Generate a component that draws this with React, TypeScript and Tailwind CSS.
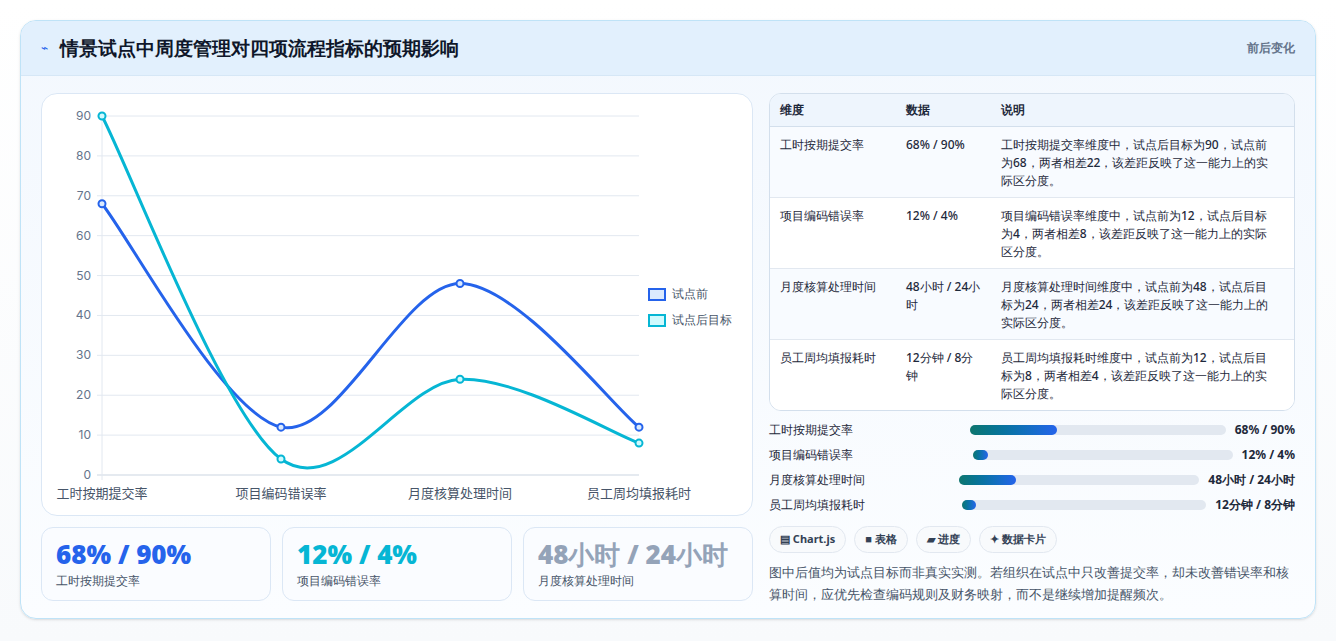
const cats = ["工时按期提交率", "项目编码错误率", "月度核算处理时间", "员工周均填报耗时"];
const before = [68, 12, 48, 12];
const after = [90, 4, 24, 8];
const xs = [60, 239, 418, 597];
const yOf = (v: number) => 381 - (v * 359) / 90;

function curve(vals: number[]): string {
  const p = vals.map((v, i) => [xs[i], yOf(v)]);
  let d = `M${p[0][0]},${p[0][1]}`;
  for (let i = 0; i < p.length - 1; i++) {
    const p0 = p[Math.max(0, i - 1)];
    const p1 = p[i];
    const p2 = p[i + 1];
    const p3 = p[Math.min(p.length - 1, i + 2)];
    const t = 0.32;
    const c1x = p1[0] + ((p2[0] - p0[0]) * t) / 2;
    const c1y = p1[1] + ((p2[1] - p0[1]) * t) / 2;
    const c2x = p2[0] - ((p3[0] - p1[0]) * t) / 2;
    const c2y = p2[1] - ((p3[1] - p1[1]) * t) / 2;
    d += ` C${c1x},${c1y} ${c2x},${c2y} ${p2[0]},${p2[1]}`;
  }
  return d;
}

const rows = [
  { dim: "工时按期提交率", data: "68% / 90%", note: "工时按期提交率维度中，试点后目标为90，试点前为68，两者相差22，该差距反映了这一能力上的实际区分度。" },
  { dim: "项目编码错误率", data: "12% / 4%", note: "项目编码错误率维度中，试点前为12，试点后目标为4，两者相差8，该差距反映了这一能力上的实际区分度。" },
  { dim: "月度核算处理时间", data: "48小时 / 24小时", note: "月度核算处理时间维度中，试点前为48，试点后目标为24，两者相差24，该差距反映了这一能力上的实际区分度。" },
  { dim: "员工周均填报耗时", data: "12分钟 / 8分钟", note: "员工周均填报耗时维度中，试点前为12，试点后目标为8，两者相差4，该差距反映了这一能力上的实际区分度。" },
];

const bars = [
  { label: "工时按期提交率", value: "68% / 90%", fill: "w-[34%]" },
  { label: "项目编码错误率", value: "12% / 4%", fill: "w-[6%]" },
  { label: "月度核算处理时间", value: "48小时 / 24小时", fill: "w-[24%]" },
  { label: "员工周均填报耗时", value: "12分钟 / 8分钟", fill: "w-[6%]" },
];

function Chart() {
  return (
    <div className="h-[423px] rounded-2xl border border-[#dbe7f5] bg-white relative">
      <svg width="712" height="423" className="absolute inset-0">
        {[0, 10, 20, 30, 40, 50, 60, 70, 80, 90].map((v) => (
          <g key={v}>
            <line x1="55" x2="597" y1={yOf(v)} y2={yOf(v)} stroke={v === 0 ? "#cbd5e1" : "#e2e8f0"} />
            <text x="49" y={yOf(v) + 4} textAnchor="end" fontSize="12" fill="#64748b" fontFamily="Inter, sans-serif">{v}</text>
          </g>
        ))}
        <line x1="60" x2="60" y1="22" y2="386" stroke="#e2e8f0" />
        {cats.map((c, i) => (
          <text key={c} x={xs[i]} y="404" textAnchor="middle" fontSize="13" fill="#475569" fontFamily="'Noto Sans CJK SC', sans-serif">{c}</text>
        ))}
        <path d={curve(before)} fill="none" stroke="#2563eb" strokeWidth="3" />
        <path d={curve(after)} fill="none" stroke="#06b6d4" strokeWidth="3" />
        {before.map((v, i) => (
          <circle key={"b" + i} cx={xs[i]} cy={yOf(v)} r="3.5" fill="#dbeafe" stroke="#2563eb" strokeWidth="2" />
        ))}
        {after.map((v, i) => (
          <circle key={"a" + i} cx={xs[i]} cy={yOf(v)} r="3.5" fill="#cffafe" stroke="#06b6d4" strokeWidth="2" />
        ))}
      </svg>
      <div className="absolute left-[606px] top-[191px] flex flex-col gap-[8px] text-[12px] font-medium text-[#475569]">
        <div className="flex items-center gap-1.5"><span className="w-[18px] h-[13px] border-2 border-[#2563eb] bg-[#dbeafe]" />试点前</div>
        <div className="flex items-center gap-1.5"><span className="w-[18px] h-[13px] border-2 border-[#06b6d4] bg-[#cffafe]" />试点后目标</div>
      </div>
    </div>
  );
}

export default function App() {
  return (
    <div className="w-[1336px] h-[641px] p-5 pb-[22px] font-['Noto_Sans_CJK_SC',sans-serif]" style={{ background: "linear-gradient(#ffffff, #f8fafc)" }}>
      <div className="h-full rounded-2xl border border-[#bfe3f7] bg-gradient-to-b from-[#f3f8fe] to-[#fbfdff] overflow-hidden shadow-sm">
        <div className="h-[55px] flex items-center justify-between px-5 bg-[#e2f0fd] border-b border-[#d6e7f6]">
          <div className="flex items-center gap-3">
            <span className="text-[#2563eb] text-[12px]">⌁</span>
            <h1 className="text-[19px] font-bold text-[#0f172a]">情景试点中周度管理对四项流程指标的预期影响</h1>
          </div>
          <span className="text-[12px] font-bold text-[#64748b]">前后变化</span>
        </div>
        <div className="flex gap-4 px-5 pt-[17px]">
          <div className="w-[712px] flex flex-col gap-[11px]">
            <Chart />
            <div className="flex gap-[11px]">
              {[
                { v: "68% / 90%", l: "工时按期提交率", c: "text-[#2563eb]" },
                { v: "12% / 4%", l: "项目编码错误率", c: "text-[#06b6d4]" },
                { v: "48小时 / 24小时", l: "月度核算处理时间", c: "text-[#94a3b8]" },
              ].map((k) => (
                <div key={k.l} className="flex-1 h-[74px] rounded-xl border border-[#dbe7f5] bg-[#fafcff] px-[14px] pt-[10px]">
                  <div className={"text-[26px] font-black leading-[32px] whitespace-nowrap " + k.c}>{k.v}</div>
                  <div className="text-[12px] text-[#475569] mt-0.5">{k.l}</div>
                </div>
              ))}
            </div>
          </div>
          <div className="flex-1 flex flex-col">
            <div className="rounded-xl border border-[#d3dfec] overflow-hidden bg-white text-[12px] text-[#1e293b]">
              <div className="flex h-[33px] items-center bg-[#eef5fd] font-bold border-b border-[#d3dfec]">
                <div className="w-[136px] pl-[10px]">维度</div>
                <div className="w-[95px]">数据</div>
                <div className="flex-1">说明</div>
              </div>
              {rows.map((r, i) => (
                <div key={r.dim} className={"flex py-[9px] font-medium leading-[18px] " + (i % 2 === 0 ? "bg-[#f8fbff] " : "bg-white ") + (i < 3 ? "border-b border-[#e2e8f0]" : "")}>
                  <div className="w-[136px] pl-[10px] pr-2">{r.dim}</div>
                  <div className="w-[95px] pr-4">{r.data}</div>
                  <div className="flex-1 pr-4 h-[52px]">{r.note}</div>
                </div>
              ))}
            </div>
            <div className="flex flex-col gap-[7px] mt-[10px]">
              {bars.map((b) => (
                <div key={b.label} className="flex items-center gap-[9px] h-[18px] text-[12px]">
                  <div className="flex-[3] text-[#1e293b] font-medium whitespace-nowrap">{b.label}</div>
                  <div className="flex-[4] h-[10px] rounded-full bg-[#e2e8f0]">
                    <div className={"h-full rounded-full bg-gradient-to-r from-[#0f766e] to-[#2563eb] " + b.fill} />
                  </div>
                  <div className="font-bold text-[#1e293b] whitespace-nowrap">{b.value}</div>
                </div>
              ))}
            </div>
            <div className="flex gap-2 mt-[12px] text-[11px] font-bold text-[#334155]">
              {["▤ Chart.js", "■ 表格", "▰ 进度", "✦ 数据卡片"].map((c) => (
                <span key={c} className="h-[27px] px-[10px] flex items-center rounded-full border border-[#e2e8f0] bg-[#f8fafc]">{c}</span>
              ))}
            </div>
            <p className="mt-[8px] text-[13px] leading-[22px] text-[#475569]">
              图中后值均为试点目标而非真实实测。若组织在试点中只改善提交率，却未改善错误率和核算时间，应优先检查编码规则及财务映射，而不是继续增加提醒频次。
            </p>
          </div>
        </div>
      </div>
    </div>
  );
}
